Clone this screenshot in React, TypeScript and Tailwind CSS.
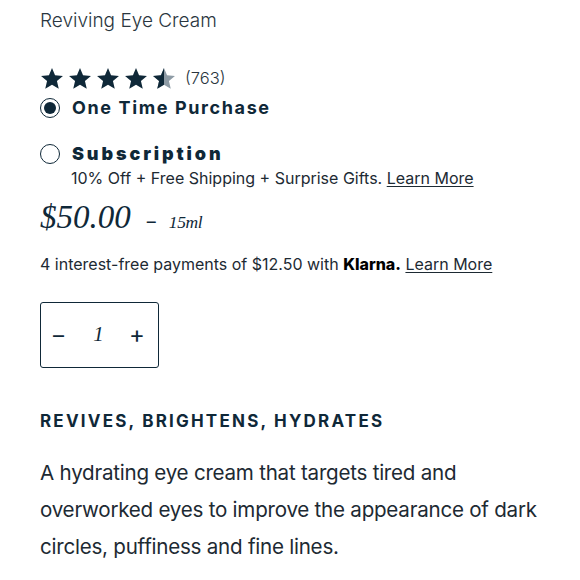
const STAR_POINTS =
  "12,1 15.06,8.29 22.94,8.95 16.95,14.11 18.76,21.8 12,17.7 5.24,21.8 7.05,14.11 1.06,8.95 8.94,8.29";

function Star({ half = false }: { half?: boolean }) {
  return (
    <svg width="24" height="23" viewBox="0 0 24 23">
      <defs>
        <clipPath id="left-half">
          <rect x="0" y="0" width="12" height="23" />
        </clipPath>
      </defs>
      {half ? (
        <>
          <polygon points={STAR_POINTS} fill="#8e9ba5" />
          <polygon points={STAR_POINTS} fill="#0f2838" clipPath="url(#left-half)" />
        </>
      ) : (
        <polygon points={STAR_POINTS} fill="#0f2838" />
      )}
    </svg>
  );
}

export default function App() {
  return (
    <div className="min-h-[580px] w-[580px] bg-white px-10 pt-[9px] font-['Inter',sans-serif] text-[#0f2838]">
      <h1 className="text-[19px] font-light leading-[24px] text-[#2a3640]">Reviving Eye Cream</h1>

      {/* rating */}
      <div className="mt-[33px] flex items-center">
        <div className="flex gap-[4px]">
          <Star />
          <Star />
          <Star />
          <Star />
          <Star half />
        </div>
        <span className="ml-[9px] text-[16.5px] font-light text-[#2a3640]">(763)</span>
      </div>

      <label className="mt-[5px] flex items-center">
        <span className="flex h-[20px] w-[20px] items-center justify-center rounded-full border-[1.5px] border-[#0f2838]">
          <span className="h-[12px] w-[12px] rounded-full bg-[#0f2838]" />
        </span>
        <span className="ml-[12px] text-[18px] font-bold leading-[24px] tracking-[0.09em]">One Time Purchase</span>
      </label>

      <div className="mt-[22px]">
        <label className="flex items-center">
          <span className="h-[20px] w-[20px] rounded-full border-[1.5px] border-[#0f2838]" />
          <span className="ml-[12px] text-[18px] font-black leading-[24px] tracking-[0.16em]">Subscription</span>
        </label>
        <p className="ml-[31px] mt-[1px] text-[16px] leading-[22px] text-[#1d2a33]">
          10% Off + Free Shipping + Surprise Gifts. <a className="underline underline-offset-2">Learn More</a>
        </p>
      </div>

      {/* price */}
      <div className="mt-[9px] flex items-baseline text-[#0f2838]">
        <span className="font-['Liberation_Serif',serif] text-[33px] italic leading-[38px]">$50.00</span>
        <span className="ml-[16px] text-[18px]">–</span>
        <span className="ml-[13px] font-['Liberation_Serif',serif] text-[17.5px] italic tracking-[-0.02em]">15ml</span>
      </div>

      <p className="mt-[17px] text-[16px] leading-[22px] text-[#1d2a33]">
        4 interest-free payments of $12.50 with <strong className="font-extrabold text-black">Klarna.</strong>{" "}
        <a className="underline underline-offset-2">Learn More</a>
      </p>

      {/* quantity */}
      <div className="mt-[27px] flex h-[66px] w-[119px] items-center justify-between rounded-[3px] border-[1.5px] border-[#0f2838] pl-[12px] pr-[13px]">
        <button className="text-[22px] leading-none">–</button>
        <span className="ml-[4px] font-['Liberation_Serif',serif] text-[21px] italic">1</span>
        <button className="text-[24px] leading-none">+</button>
      </div>

      <h2 className="mt-[41px] text-[17px] font-bold leading-[24px] tracking-[0.13em]">REVIVES, BRIGHTENS, HYDRATES</h2>

      <p className="mt-[21px] text-[20.6px] leading-[37px] tracking-[-0.012em] text-[#1d2a33]">
        A hydrating eye cream that targets tired and overworked eyes to improve the appearance of dark circles,
        puffiness and fine lines.
      </p>
    </div>
  );
}
